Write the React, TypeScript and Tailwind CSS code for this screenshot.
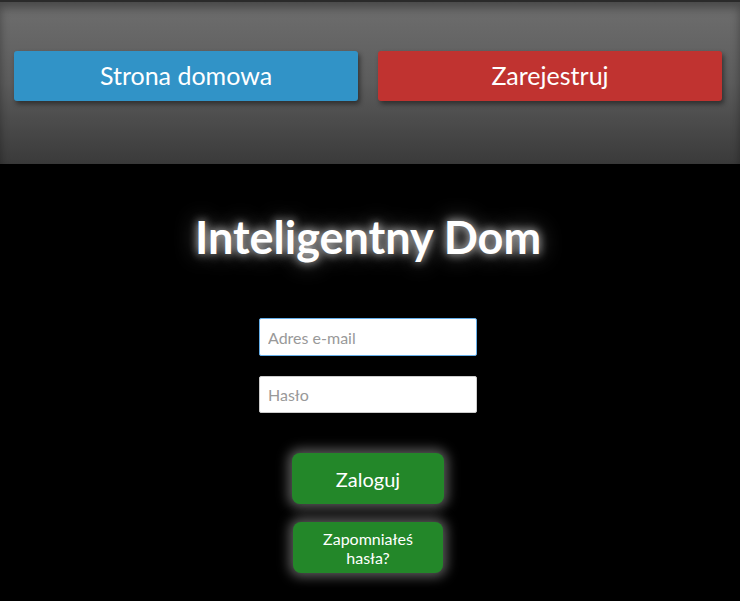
import React from "react";

const App = () => {
  return (
    <div className="min-h-[601px] bg-black font-['Lato','Liberation_Sans',sans-serif]">
      {/* --- Header --- */}
      <header className="h-[164px] border-t-2 border-[#2a2a2a] bg-gradient-to-b from-[#6e6e6e] via-[#5c5c5c] to-[#3a3a3a] shadow-[inset_0_6px_10px_rgba(0,0,0,0.35)] pl-[14px] pr-[18px] pt-[49px] flex gap-5">
        <button className="flex-1 h-[50px] rounded-[3px] bg-[#3193c7] text-white text-[25px] shadow-[2px_3px_5px_rgba(0,0,0,0.45)]">
          Strona domowa
        </button>
        <button className="flex-1 h-[50px] rounded-[3px] bg-[#c03330] text-white text-[25px] shadow-[2px_3px_5px_rgba(0,0,0,0.45)]">
          Zarejestruj
        </button>
      </header>

      {/* --- Login --- */}
      <main className="flex flex-col items-center pr-[4px]">
        <h1 className="mt-[43px] text-[45px] font-bold text-white leading-[60px] [text-shadow:0_0_10px_rgba(255,255,255,0.8),0_0_22px_rgba(255,255,255,0.45)]">
          Inteligentny Dom
        </h1>

        <div className="mt-[51px] flex flex-col gap-5">
          <input
            type="email"
            placeholder="Adres e-mail"
            className="w-[218px] h-[38px] rounded-[2px] bg-white border border-[#66afe9] px-2 text-[16px] text-gray-700 placeholder:text-[#999] outline-none"
          />
          <input
            type="password"
            placeholder="Hasło"
            className="w-[218px] h-[37px] rounded-[2px] bg-white border border-[#ccc] px-2 text-[16px] text-gray-700 placeholder:text-[#999] outline-none"
          />
        </div>

        <button className="mt-[40px] w-[152px] h-[51px] rounded-[8px] bg-[#238729] text-white text-[20px] shadow-[0_0_12px_4px_rgba(140,140,140,0.65)]">
          Zaloguj
        </button>
        <button className="mt-[18px] w-[150px] h-[51px] rounded-[8px] bg-[#238729] text-white text-[16px] leading-[19px] shadow-[0_0_12px_4px_rgba(140,140,140,0.65)]">
          Zapomniałeś
          <br />
          hasła?
        </button>
      </main>
    </div>
  );
};

export default App;
